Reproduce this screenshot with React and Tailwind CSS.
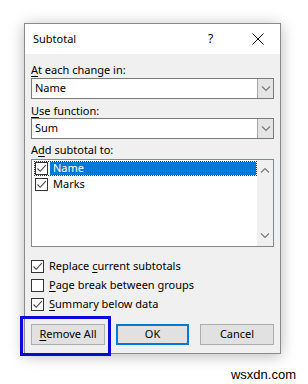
import React from "react";

const font = { fontFamily: '"Noto Sans", "Open Sans", sans-serif' };

function Chevron({ up }) {
  return (
    <svg width="10" height="6" viewBox="0 0 10 6" className="block">
      <path
        d={up ? "M1 5.5 L5 1.5 L9 5.5" : "M1 0.5 L5 4.5 L9 0.5"}
        fill="none"
        stroke="#7a7a7a"
        strokeWidth="1.2"
      />
    </svg>
  );
}

function Check({ on }) {
  return (
    <div className="w-[13px] h-[13px] border border-[#333] bg-white flex items-center justify-center shrink-0">
      {on && (
        <svg width="11" height="11" viewBox="0 0 11 11">
          <path d="M1.5 5.5 L4.2 8.3 L9.8 2.2" fill="none" stroke="#444" strokeWidth="1.1" />
        </svg>
      )}
    </div>
  );
}

function Select({ value }) {
  return (
    <div className="h-[21px] border border-[#7a7a7a] bg-white flex items-stretch">
      <div className="flex-1 pl-[3px] flex items-center text-[11px] text-black">{value}</div>
      <div className="w-[16px] bg-[#e5e5e5] border-l border-[#a5a5a5] flex items-center justify-center">
        <Chevron />
      </div>
    </div>
  );
}

function Option({ on, children }) {
  return (
    <div className="h-[19px] flex items-center gap-[5px] text-[11px] text-black">
      <Check on={on} />
      <span>{children}</span>
    </div>
  );
}

export default function App() {
  return (
    <div className="w-[308px] h-[384px] bg-white relative overflow-hidden" style={font}>
      <div className="ml-[24px] mt-[23px] w-[257px] border border-[#8a8a8a] bg-[#f0f0f0] shadow-[0_2px_14px_rgba(0,0,0,0.28)]">
        <div className="h-[30px] bg-white flex items-center pl-[8px] text-[11px] text-black">
          <span className="flex-1">Subtotal</span>
          <span className="w-[14px] text-[12px] mr-[30px]">?</span>
          <svg width="12" height="12" viewBox="0 0 12 12" className="mr-[16px]">
            <path d="M0.5 0.5 L11.5 11.5 M11.5 0.5 L0.5 11.5" stroke="#111" strokeWidth="1" />
          </svg>
        </div>

        <div className="px-[6px] pb-[8px]">
          <div className="mt-[8px] h-[15px] leading-[15px] text-[11px] text-black">
            <span className="underline underline-offset-2">A</span>t each change in:
          </div>
          <div className="mt-[1px]">
            <Select value="Name" />
          </div>

          <div className="mt-[4px] h-[15px] leading-[15px] text-[11px] text-black">
            <span className="underline underline-offset-2">U</span>se function:
          </div>
          <Select value="Sum" />

          <div className="mt-[3px] h-[15px] leading-[15px] text-[11px] text-black">
            A<span className="underline underline-offset-2">d</span>d subtotal to:
          </div>
          <div className="mt-[2px] h-[88px] border border-[#828790] bg-white flex">
            <div className="flex-1 pt-[1px] pl-[2px]">
              <div className="h-[15px] flex items-center border border-dotted border-[#333]">
                <Check on />
                <div className="flex-1 h-full bg-[#0078d7] text-white text-[11px] pl-[3px] ml-[2px] flex items-center">
                  Name
                </div>
              </div>
              <div className="h-[15px] flex items-center pl-[1px] mt-[1px]">
                <Check on />
                <span className="text-[11px] text-black pl-[5px]">Marks</span>
              </div>
            </div>
            <div className="w-[16px] bg-[#f0f0f0] flex flex-col items-center justify-between py-[7px]">
              <Chevron up />
              <Chevron />
            </div>
          </div>

          <div className="mt-[10px]">
            <Option on>
              Replace <span className="underline underline-offset-2">c</span>urrent subtotals
            </Option>
            <Option>
              <span className="underline underline-offset-2">P</span>age break between groups
            </Option>
            <Option on>
              <span className="underline underline-offset-2">S</span>ummary below data
            </Option>
          </div>

          <div className="mt-[10px] flex gap-[11px]">
            <div className="relative w-[74px]">
              <div className="absolute left-[-11px] top-[-8px] w-[91px] h-[40px] border-[3px] border-[#0a0ad6]" />
              <div className="h-[21px] bg-[#e1e1e1] border border-[#adadad] flex items-center justify-center text-[11px] text-black">
                <span>
                  <span className="underline underline-offset-2">R</span>emove All
                </span>
              </div>
            </div>
            <div className="w-[73px] h-[21px] bg-[#e1e1e1] border-2 border-[#0078d7] flex items-center justify-center text-[11px] text-black">
              OK
            </div>
            <div className="w-[74px] h-[21px] bg-[#e1e1e1] border border-[#adadad] flex items-center justify-center text-[11px] text-black">
              Cancel
            </div>
          </div>
        </div>
      </div>

      <div
        className="mt-[13px] flex justify-end pr-[12px] text-[13px] leading-[15px] text-black"
        style={{ fontFamily: '"Liberation Sans", Arial, sans-serif' }}
      >
        wsxdn.com
      </div>
    </div>
  );
}
